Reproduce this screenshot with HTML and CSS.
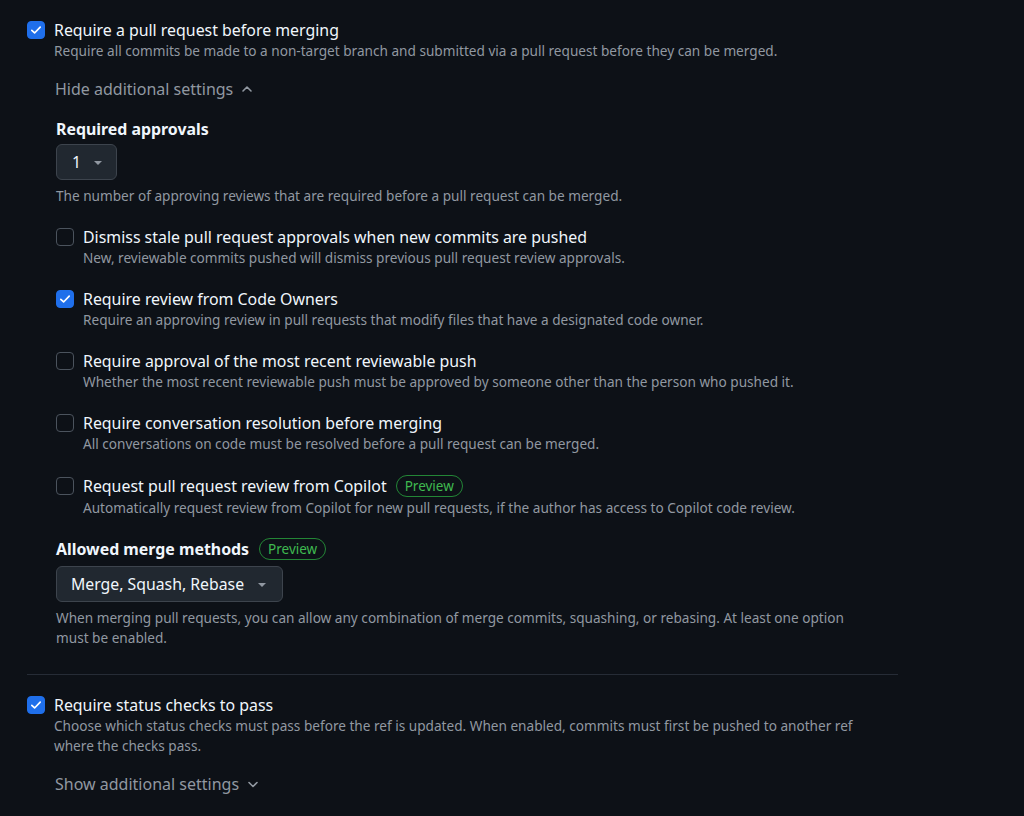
FILE: index.html
```html
<!DOCTYPE html>
<html lang="en">
<head>
<meta charset="utf-8">
<title>Branch rules</title>
<link rel="stylesheet" href="styles.css">
</head>
<body>
<div class="page">
  <div class="rule">
    <span class="cb checked"><svg viewBox="0 0 16 16" width="14" height="14"><path d="M3.2 8.4 6.4 11.4 12.8 4.8" fill="none" stroke="#fff" stroke-width="1.9" stroke-linecap="round" stroke-linejoin="round"/></svg></span>
    <div class="rule-body">
      <div class="title">Require a pull request before merging</div>
      <div class="desc">Require all commits be made to a non-target branch and submitted via a pull request before they can be merged.</div>
      <div class="toggle">Hide additional settings <svg class="chev" viewBox="0 0 12 12" width="12" height="12"><path d="M2 8 6 4 10 8" fill="none" stroke="#9198a1" stroke-width="1.6" stroke-linecap="round" stroke-linejoin="round"/></svg></div>
      <div class="nested">
        <div class="heading">Required approvals</div>
        <div class="select small"><span>1</span><span class="caret"></span></div>
        <div class="desc after-select">The number of approving reviews that are required before a pull request can be merged.</div>

        <div class="rule sub">
          <span class="cb"></span>
          <div class="rule-body">
            <div class="title">Dismiss stale pull request approvals when new commits are pushed</div>
            <div class="desc">New, reviewable commits pushed will dismiss previous pull request review approvals.</div>
          </div>
        </div>
        <div class="rule sub">
          <span class="cb checked"><svg viewBox="0 0 16 16" width="14" height="14"><path d="M3.2 8.4 6.4 11.4 12.8 4.8" fill="none" stroke="#fff" stroke-width="1.9" stroke-linecap="round" stroke-linejoin="round"/></svg></span>
          <div class="rule-body">
            <div class="title">Require review from Code Owners</div>
            <div class="desc">Require an approving review in pull requests that modify files that have a designated code owner.</div>
          </div>
        </div>
        <div class="rule sub">
          <span class="cb"></span>
          <div class="rule-body">
            <div class="title">Require approval of the most recent reviewable push</div>
            <div class="desc">Whether the most recent reviewable push must be approved by someone other than the person who pushed it.</div>
          </div>
        </div>
        <div class="rule sub">
          <span class="cb"></span>
          <div class="rule-body">
            <div class="title">Require conversation resolution before merging</div>
            <div class="desc">All conversations on code must be resolved before a pull request can be merged.</div>
          </div>
        </div>
        <div class="rule sub">
          <span class="cb badge-row"></span>
          <div class="rule-body">
            <div class="title with-badge">Request pull request review from Copilot <span class="badge">Preview</span></div>
            <div class="desc">Automatically request review from Copilot for new pull requests, if the author has access to Copilot code review.</div>
          </div>
        </div>

        <div class="heading with-badge merge-heading">Allowed merge methods <span class="badge">Preview</span></div>
        <div class="select wide"><span>Merge, Squash, Rebase</span><span class="caret"></span></div>
        <div class="desc after-select">When merging pull requests, you can allow any combination of merge commits, squashing, or rebasing. At least one option must be enabled.</div>
      </div>
    </div>
  </div>

  <div class="divider"></div>

  <div class="rule">
    <span class="cb checked"><svg viewBox="0 0 16 16" width="14" height="14"><path d="M3.2 8.4 6.4 11.4 12.8 4.8" fill="none" stroke="#fff" stroke-width="1.9" stroke-linecap="round" stroke-linejoin="round"/></svg></span>
    <div class="rule-body">
      <div class="title">Require status checks to pass</div>
      <div class="desc">Choose which status checks must pass before the ref is updated. When enabled, commits must first be pushed to another ref where the checks pass.</div>
      <div class="toggle">Show additional settings <svg class="chev" viewBox="0 0 12 12" width="12" height="12"><path d="M2 4.5 6 8.5 10 4.5" fill="none" stroke="#9198a1" stroke-width="1.6" stroke-linecap="round" stroke-linejoin="round"/></svg></div>
    </div>
  </div>
</div>
</body>
</html>
```

FILE: styles.css
```css
* { box-sizing: border-box; }
html, body { margin: 0; padding: 0; }
body {
  background: #0d1117;
  color: #f0f6fc;
  font-family: "Noto Sans", "Open Sans", sans-serif;
  width: 1024px;
  height: 816px;
  overflow: hidden;
}
.page {
  padding: 19px 0 0 27px;
  width: 898px;
}
.rule {
  display: flex;
  gap: 9px;
  align-items: flex-start;
}
.rule-body {
  flex: 1;
  min-width: 0;
  padding-right: 28px;
}
.cb {
  flex: none;
  width: 18px;
  height: 18px;
  margin-top: 2px;
  border: 1px solid #4b535d;
  border-radius: 4px;
  display: flex;
  align-items: center;
  justify-content: center;
}
.cb.checked {
  background: #1f6feb;
  border-color: #1f6feb;
}
.cb.badge-row { margin-top: 3px; }
.title {
  font-size: 15.9px;
  line-height: 22px;
}
.title.with-badge,
.heading.with-badge {
  display: flex;
  align-items: center;
  gap: 9px;
  min-height: 24px;
}
.heading.with-badge { gap: 10px; }
.desc {
  font-size: 13.62px;
  line-height: 20px;
  color: #9198a1;
}
.toggle {
  margin-top: 16px;
  font-size: 16px;
  line-height: 24px;
  color: #9198a1;
  display: flex;
  align-items: center;
  gap: 8px;
  margin-left: 1px;
}
.nested {
  padding-left: 2px;
}
.heading {
  margin-top: 17px;
  font-size: 15.9px;
  font-weight: 700;
  line-height: 22px;
}
.merge-heading {
  margin-top: 19px;
}
.badge {
  display: inline-flex;
  align-items: center;
  height: 22px;
  padding: 0 8px;
  border: 1px solid #238636;
  border-radius: 999px;
  color: #3fb950;
  font-size: 13.5px;
  font-weight: 400;
  line-height: 20px;
}
.select {
  margin-top: 4px;
  height: 36px;
  display: inline-flex;
  align-items: center;
  gap: 13px;
  padding: 0 14px 0 15px;
  background: #212830;
  border: 1px solid #3d444d;
  border-radius: 6px;
  font-size: 15.8px;
  color: #f0f6fc;
}
.select.wide { margin-top: 5px; padding: 0 16px 0 14px; gap: 14px; }
.caret {
  width: 0;
  height: 0;
  border-left: 4.5px solid transparent;
  border-right: 4.5px solid transparent;
  border-top: 4.5px solid #9198a1;
  margin-top: 2px;
}
.after-select {
  margin-top: 6px;
}
.rule.sub {
  margin-top: 20px;
}
.divider {
  height: 1px;
  background: #262c36;
  margin: 26px 0 19px;
  width: 871px;
}
.chev { display: block; }
```
